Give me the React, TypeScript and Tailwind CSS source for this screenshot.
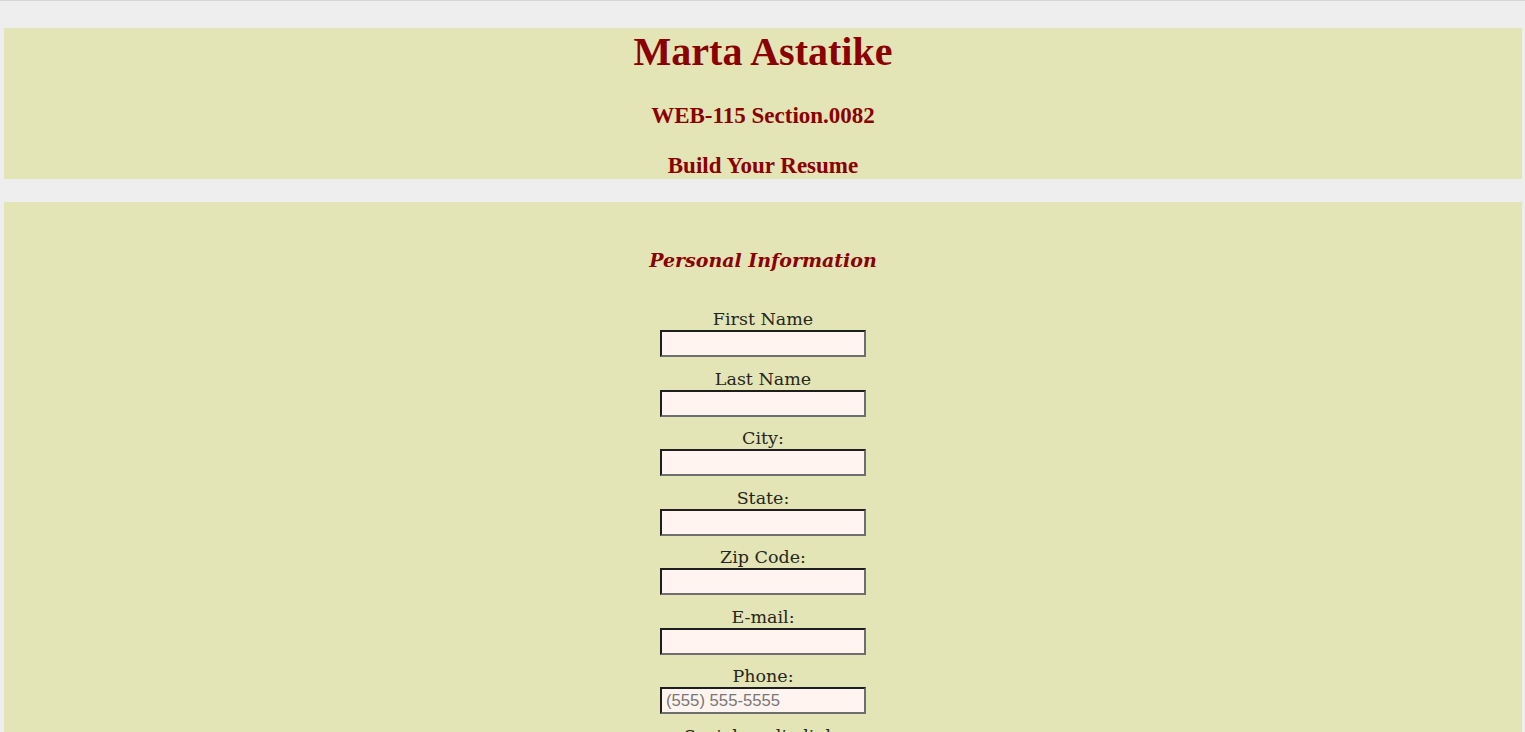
const fields = [
  { label: 'First Name' },
  { label: 'Last Name' },
  { label: 'City:' },
  { label: 'State:' },
  { label: 'Zip Code:' },
  { label: 'E-mail:' },
  { label: 'Phone:', placeholder: '(555) 555-5555' },
]

function Field({ label, placeholder }: { label: string; placeholder?: string }) {
  return (
    <div className="flex flex-col items-center">
      <label className="text-[17.5px] leading-[22px] text-[#26261c]">{label}</label>
      <input
        type="text"
        placeholder={placeholder}
        className="box-border h-[27px] w-[206px] border-2 border-t-[#1e1e1e] border-l-[#1e1e1e] border-r-[#6e6e6e] border-b-[#6e6e6e] bg-[#fff4ef] px-[4px] font-['Liberation_Sans',sans-serif] text-[16.7px] text-black outline-none placeholder:text-[#777]"
      />
    </div>
  )
}

export default function App() {
  return (
    <div className="min-h-[732px] border-t border-[#d6d6d6] bg-[#eeeeee] pt-[27px] pl-[4px] pr-[3px] font-['DejaVu_Serif',serif]">
      <header className="flex h-[151px] flex-col items-center bg-[#e3e5b6] font-['Liberation_Serif',serif] font-bold text-[#8b0000]">
        <h1 className="mt-[1px] text-[40px] leading-[46px]">Marta Astatike</h1>
        <h2 className="mt-[28px] text-[23px] leading-[26px]">WEB-115 Section.0082</h2>
        <h3 className="mt-[24px] text-[23px] leading-[26px]">Build Your Resume</h3>
      </header>

      <main className="mt-[23px] flex flex-col items-center bg-[#e3e5b6] pb-10">
        <h2 className="mt-[46px] text-[19px] font-bold italic leading-[24px] text-[#8b0000]">
          Personal Information
        </h2>
        <form className="mt-[36px] flex flex-col gap-[10.5px]">
          {fields.map((f) => (
            <Field key={f.label} label={f.label} placeholder={f.placeholder} />
          ))}
          <Field label="Social media link:" />
        </form>
      </main>
    </div>
  )
}
